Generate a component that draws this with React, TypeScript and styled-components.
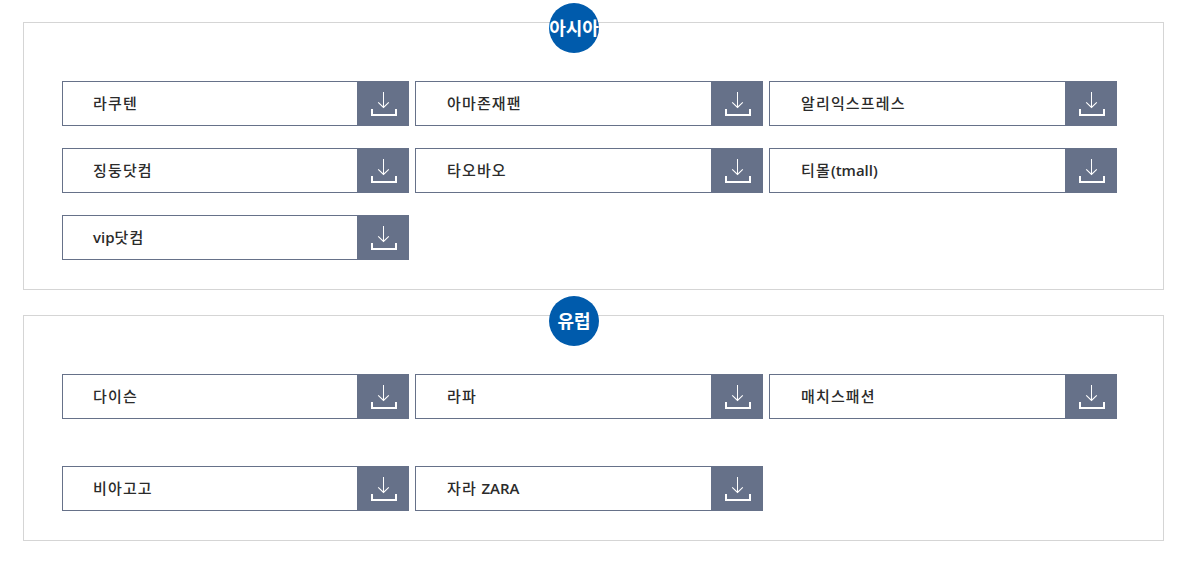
import React from 'react';
import styled, { createGlobalStyle } from 'styled-components';

interface Shop {
  name: string;
  latin?: string;
  latinFirst?: boolean;
}

interface Region {
  title: string;
  rowGap: number;
  shops: Shop[];
}

const regions: Region[] = [
  {
    title: '아시아',
    rowGap: 22,
    shops: [
      { name: '라쿠텐' },
      { name: '아마존재팬' },
      { name: '알리익스프레스' },
      { name: '징둥닷컴' },
      { name: '타오바오' },
      { name: '티몰', latin: '(tmall)' },
      { name: '닷컴', latin: 'vip', latinFirst: true },
    ],
  },
  {
    title: '유럽',
    rowGap: 47,
    shops: [
      { name: '다이슨' },
      { name: '라파' },
      { name: '매치스패션' },
      { name: '비아고고' },
      { name: '자라 ', latin: 'ZARA' },
    ],
  },
];

const DownloadIcon: React.FC = () => (
  <svg width="26" height="24" viewBox="0 0 26 24" fill="none" stroke="#fff">
    <path d="M12.5 0v16" />
    <path d="M7.2 10.3l5.3 5.2 5.3-5.2" strokeWidth="1.1" />
    <path d="M1 17v6h24v-6" strokeWidth="2" />
  </svg>
);

const App: React.FC = () => {
  return (
    <>
      <GlobalStyle />
      <Page>
        {regions.map(region => (
          <Section key={region.title}>
            <Badge>{region.title}</Badge>
            <ShopList $rowGap={region.rowGap}>
              {region.shops.map(shop => (
                <ShopItem key={shop.name}>
                  <ShopName>
                    {shop.latinFirst && <Latin>{shop.latin}</Latin>}
                    {shop.name}
                    {!shop.latinFirst && shop.latin && <Latin>{shop.latin}</Latin>}
                  </ShopName>
                  <Download>
                    <DownloadIcon />
                  </Download>
                </ShopItem>
              ))}
            </ShopList>
          </Section>
        ))}
      </Page>
    </>
  );
};

export default App;

const GlobalStyle = createGlobalStyle`
  * {
    box-sizing: border-box;
  }

  body {
    margin: 0;
    background: #fff;
    color: #2b2b2b;
    font-family: 'Noto Sans CJK KR', sans-serif;
  }
`;

const Page = styled.div`
  display: flex;
  flex-direction: column;
  gap: 25px;
  padding: 22px 31px 0 23px;
`;

const Section = styled.section`
  position: relative;
  padding: 58px 46px 29px 38px;
  border: 1px solid #d5d5d5;
`;

const Badge = styled.h2`
  position: absolute;
  top: -20px;
  left: 525px;
  width: 50px;
  height: 50px;
  margin: 0;
  border-radius: 50%;
  background: #005bac;
  color: #fff;
  font-size: 18px;
  font-weight: 700;
  line-height: 48px;
  text-align: center;
  white-space: nowrap;
`;

const ShopList = styled.ul<{ $rowGap: number }>`
  display: grid;
  grid-template-columns: 347px 348px 348px;
  gap: ${props => props.$rowGap}px 6px;
  margin: 0;
  padding: 0;
  list-style: none;
`;

const ShopItem = styled.li`
  display: flex;
  height: 45px;
  border: 1px solid #667189;

  &:not(:nth-child(3n + 1)) > span:first-child {
    padding-left: 31px;
  }
`;

const ShopName = styled.span`
  flex: 1;
  padding-left: 30px;
  font-size: 15px;
  font-weight: 500;
  letter-spacing: 1.15px;
  line-height: 41px;
  white-space: pre;
`;

const Latin = styled.span`
  font-family: 'Open Sans', 'Noto Sans', sans-serif;
  font-weight: 600;
  letter-spacing: 0;
`;

const Download = styled.span`
  width: 51px;
  padding: 10px 0 0 13px;
  background: #667189;
  line-height: 0;

  svg {
    margin-left: 1px;
  }
`;
